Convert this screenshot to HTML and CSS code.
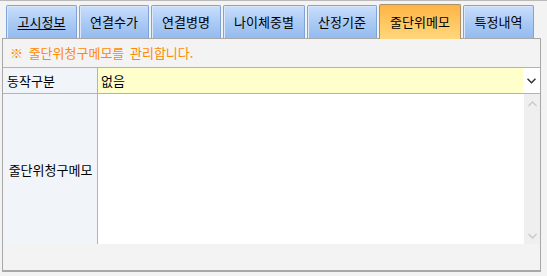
FILE: index.html
```html
<!DOCTYPE html>
<html lang="ko">
<head>
    <meta charset="UTF-8">
    <meta name="viewport" content="width=device-width, initial-scale=1.0">
    <title>줄단위메모</title>
    <link rel="stylesheet" href="styles.css">
</head>
<body>
    <div class="tabs">
        <div class="tab tab-focus w71">고시정보</div>
        <div class="tab w70">연결수가</div>
        <div class="tab w70">연결병명</div>
        <div class="tab w82">나이체중별</div>
        <div class="tab w70">산정기준</div>
        <div class="tab tab-active w82">줄단위메모</div>
        <div class="tab w71">특정내역</div>
    </div>
    <div class="panel">
        <p class="notice">※ 줄단위청구메모를 관리합니다.</p>
        <div class="form">
            <div class="label label-first">동작구분</div>
            <div class="select">
                <span class="select-value">없음</span>
                <span class="select-btn">
                    <svg width="9" height="6" viewBox="0 0 9 6"><path d="M0.5 0.8 L4.5 4.8 L8.5 0.8" fill="none" stroke="#333" stroke-width="1.5"/></svg>
                </span>
            </div>
            <div class="label label-memo">줄단위청구메모</div>
            <div class="memo">
                <div class="memo-text"></div>
                <div class="scroll">
                    <svg width="9" height="6" viewBox="0 0 9 6"><path d="M0.5 5 L4.5 1 L8.5 5" fill="none" stroke="#c9c9c9" stroke-width="1.3"/></svg>
                    <svg width="9" height="6" viewBox="0 0 9 6"><path d="M0.5 1 L4.5 5 L8.5 1" fill="none" stroke="#c9c9c9" stroke-width="1.3"/></svg>
                </div>
            </div>
        </div>
    </div>
</body>
</html>
```
FILE: styles.css
```css
html, body {
    margin: 0;
    height: 276px;
    overflow: hidden;
}
body {
    background-color: #f3f3f3;
    border-top: 1px solid #b9b9b9;
    box-sizing: border-box;
    font-family: "Noto Sans CJK KR", "Noto Sans", sans-serif;
    font-size: 13px;
    color: #000;
}
.tabs {
    display: flex;
    align-items: flex-start;
    gap: 2px;
    padding: 4px 0 0 6px;
}
.tab {
    box-sizing: border-box;
    height: 33px;
    line-height: 31px;
    text-align: center;
    border: 1px solid #7ea3d8;
    border-bottom: none;
    border-radius: 2px 2px 0 0;
    background: linear-gradient(#c9defb, #a9c9f4 55%, #94bbef);
    box-shadow: inset 1px 1px 0 #dbe8fc;
}
.w70 { width: 70px; }
.w71 { width: 71px; }
.w82 { width: 82px; }
.tab-focus {
    text-decoration: underline;
    text-underline-offset: 2px;
}
.tab-active {
    position: relative;
    z-index: 1;
    height: 35px;
    margin-top: -1px;
    margin-bottom: -1px;
    line-height: 33px;
    border-color: #a6916b;
    background: linear-gradient(#ffb444, #ffc660 50%, #ffd87c);
    box-shadow: none;
}
.panel {
    box-sizing: border-box;
    width: 539px;
    height: 234px;
    margin-left: 2px;
    border: 1px solid #a8a8a8;
    border-bottom-width: 2px;
    background-color: #f3f3f3;
}
.notice {
    margin: 0;
    height: 28px;
    line-height: 28px;
    padding-left: 7px;
    color: #ff8a00;
    word-spacing: 2px;
}
.form {
    display: grid;
    grid-template-columns: 95px 1fr;
    grid-template-rows: 26px 1fr;
    height: 176px;
    border-top: 1px solid #b3b3b3;
}
.label {
    background-color: #f1f5f9;
    border-right: 1px solid #b3b3b3;
    display: flex;
    align-items: center;
}
.label-first {
    padding-left: 4px;
    border-bottom: 1px solid #b3b3b3;
}
.label-memo {
    justify-content: center;
    padding-left: 1px;
}
.select {
    display: flex;
    align-items: center;
    background-color: #ffffcc;
    border-bottom: 1px solid #b3b3b3;
}
.select-value {
    flex: 1;
    padding-left: 3px;
}
.select-btn {
    width: 17px;
    align-self: stretch;
    display: flex;
    align-items: center;
    justify-content: center;
    background-color: #fff;
}
.memo {
    display: flex;
    background-color: #fff;
}
.memo-text {
    flex: 1;
}
.scroll {
    width: 16px;
    background-color: #efefef;
    display: flex;
    flex-direction: column;
    justify-content: space-between;
    align-items: center;
    padding: 7px 0 5px;
}
```
